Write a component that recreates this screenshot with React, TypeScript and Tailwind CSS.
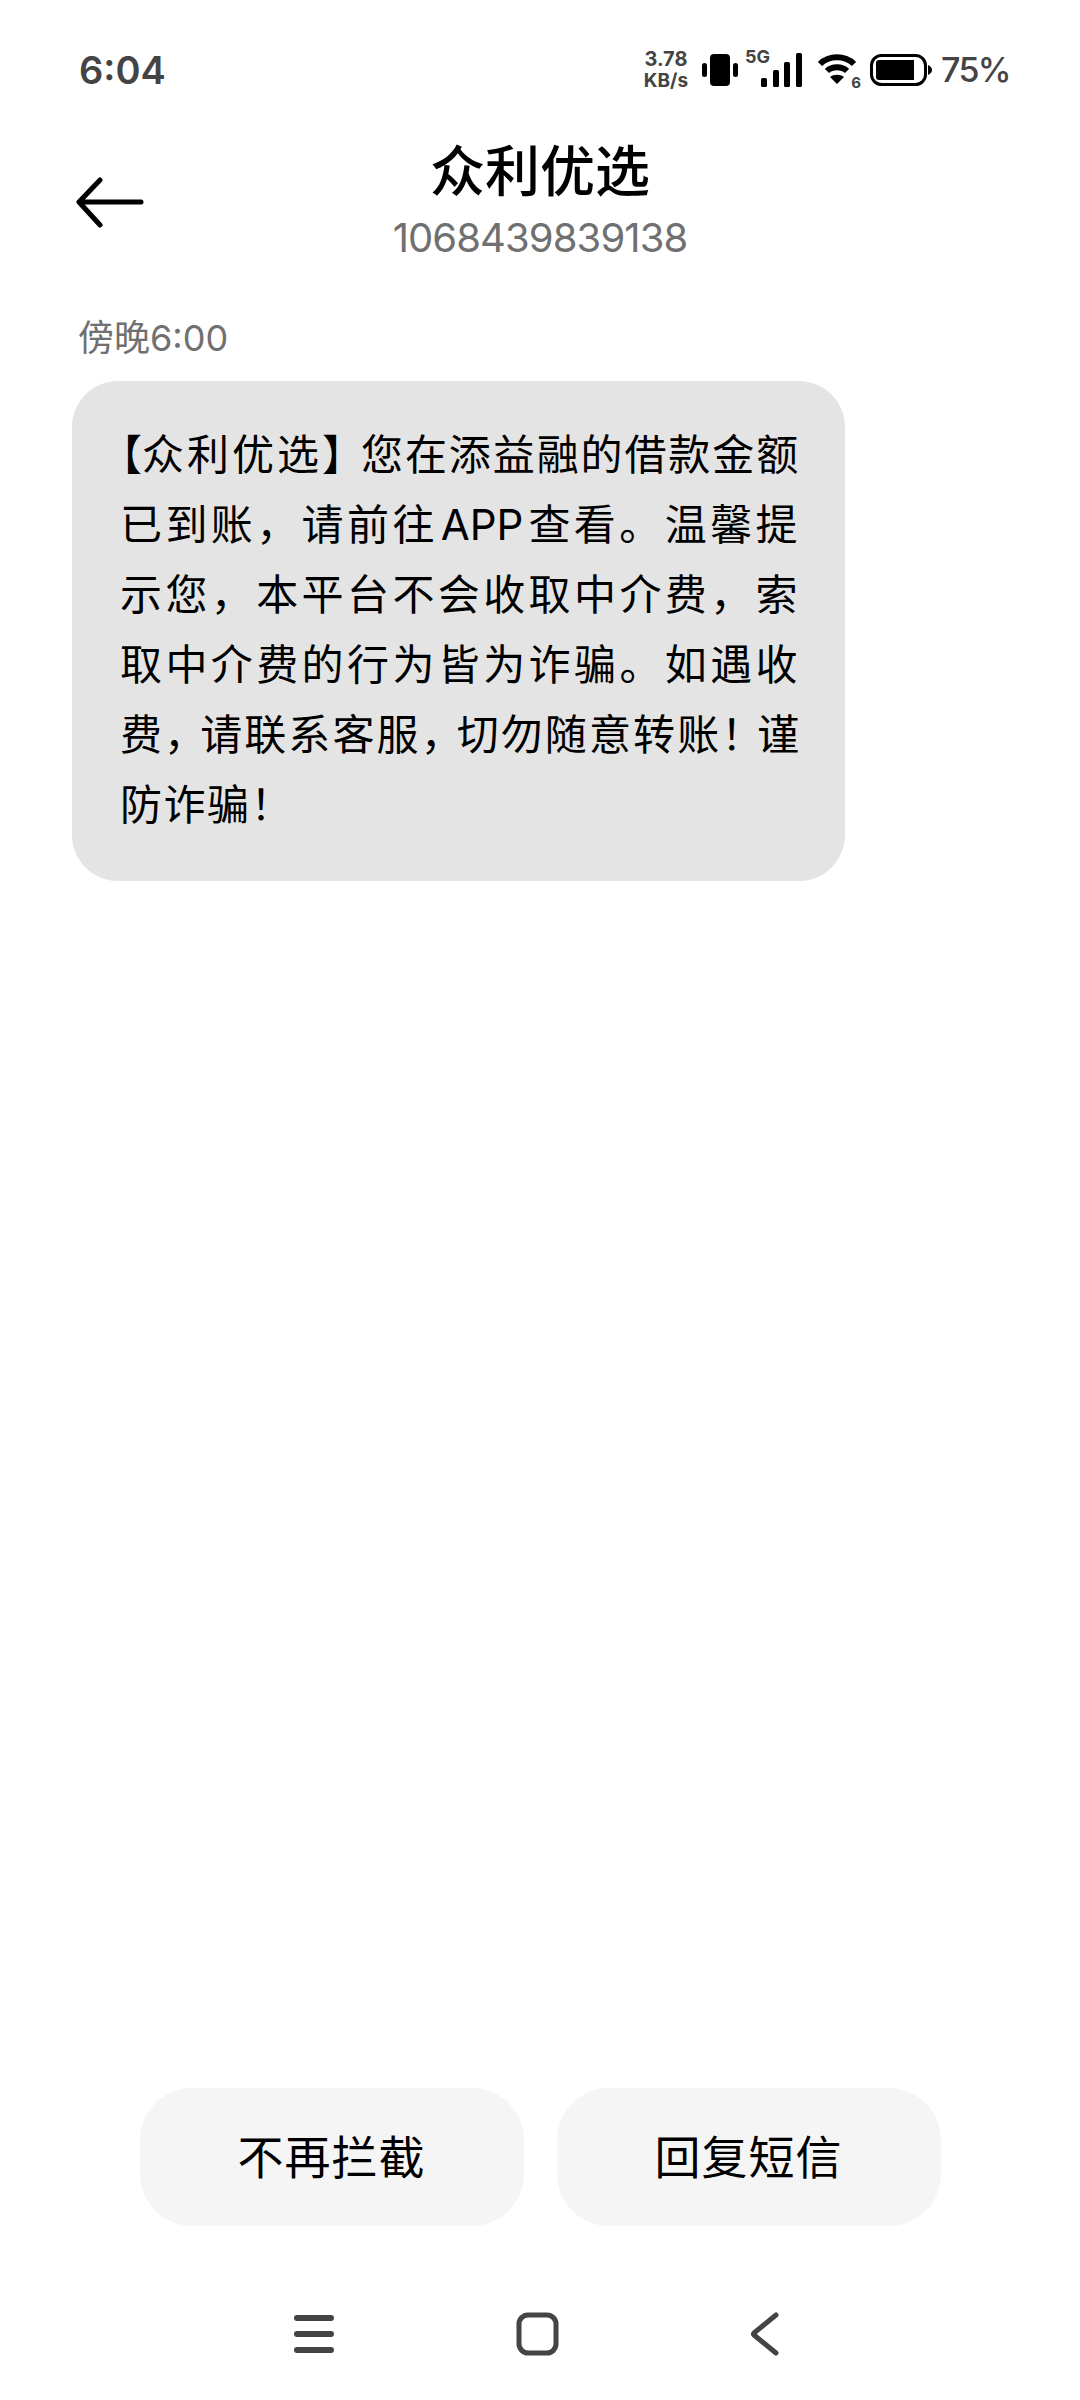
function Line({ children, className }: { children: React.ReactNode; className?: string }) {
  return <div className={`text-[42px] leading-[70px] text-black whitespace-pre ${className ?? "tracking-[3.4px]"}`}>{children}</div>;
}

function StatusIcons() {
  return (
    <div className="flex items-center">
      <div className="w-[50px] text-[20px] leading-[22px] font-bold text-[#444] text-center">
        <div>3.78</div>
        <div className="text-[19px]">KB/s</div>
      </div>
      <svg width="38" height="34" viewBox="0 0 38 34" className="ml-[10px]" fill="#000">
        <rect x="9" y="1" width="20" height="32" rx="4" />
        <rect x="1" y="10" width="5" height="14" rx="2.5" />
        <rect x="32" y="10" width="5" height="14" rx="2.5" />
      </svg>
      <div className="relative w-[62px] h-[40px] ml-[6px]">
        <span className="absolute left-0 top-[-3px] text-[18px] leading-[20px] font-bold text-[#444]">5G</span>
        <svg width="62" height="40" viewBox="0 0 62 40" fill="#000" className="absolute left-0 top-0">
          <rect x="16" y="28" width="6" height="9" rx="1.5" />
          <rect x="28" y="20" width="6" height="17" rx="1.5" />
          <rect x="39" y="12" width="6" height="25" rx="1.5" />
          <rect x="51" y="3" width="6" height="34" rx="1.5" />
        </svg>
      </div>
      <div className="relative w-[44px] h-[38px] ml-[10px]">
        <svg width="40" height="32" viewBox="0 0 40 32" className="absolute left-0 top-[2px]" fill="none" stroke="#000" strokeWidth="6">
          <path d="M3 11 C12 2 28 2 37 11" />
          <path d="M10 18 C15 13 25 13 30 18" />
          <path d="M13 24 L20 31 L27 24 C23 21 17 21 13 24 Z" fill="#000" stroke="none" />
        </svg>
        <span className="absolute right-0 bottom-[-3px] text-[15px] leading-[18px] font-bold text-[#444]">6</span>
      </div>
      <svg width="62" height="32" viewBox="0 0 62 32" className="ml-[9px]">
        <rect x="1.5" y="1.5" width="54" height="29" rx="10" fill="none" stroke="#000" strokeWidth="3" />
        <path d="M9 6 H44 V26 H9 Q6 26 6 23 V9 Q6 6 9 6 Z" fill="#000" />
        <path d="M58 11 Q62 13 62 16 Q62 19 58 21 Z" fill="#000" />
      </svg>
      <span className="ml-[9px] text-[34px] leading-none font-medium text-[#444] tracking-[-1.6px]">75%</span>
    </div>
  );
}

export default function App() {
  return (
    <div className="w-[1080px] h-[2400px] bg-white flex flex-col font-['Inter','Noto_Sans_CJK_SC',sans-serif]">
      {/* status bar */}
      <div className="h-[70px] mt-[35px] pl-[79px] pr-[70px] flex items-center justify-between shrink-0">
        <span className="text-[38px] font-semibold text-[#444]">6:04</span>
        <StatusIcons />
      </div>

      {/* header */}
      <div className="relative flex flex-col items-center mt-[30px] shrink-0">
        <svg width="68" height="52" viewBox="0 0 68 52" className="absolute left-[76px] top-[42px]" fill="none" stroke="#000" strokeWidth="5" strokeLinecap="round" strokeLinejoin="round">
          <path d="M65 25 H3 M24 3 L3 25 L24 48" />
        </svg>
        <h1 className="text-[55px] leading-[72px] font-medium text-black">众利优选</h1>
        <div className="mt-[3px] text-[40px] leading-[56px] text-[#707070] tracking-[-0.9px]">1068439839138</div>
      </div>

      {/* message */}
      <div className="mt-[47px] pl-[78px] text-[36px] leading-[50px] text-[#707070] shrink-0">傍晚6:00</div>
      <div className="mt-[18px] ml-[72px] w-[773px] h-[500px] bg-[#e4e4e4] rounded-[46px] pl-[48px] pt-[39px] shrink-0">
        <Line className="tracking-[3px]">
          <span className="-ml-[20px] tracking-[-17px]">【</span>
          <span className="ml-[17px]">众利优选</span>
          <span className="tracking-[-3px]">】</span>
          <span className="tracking-[1.9px]">您在添益融的借款金额</span>
        </Line>
        <Line>已到账，请前往<span className="ml-[3px] mr-[5px] tracking-normal">APP</span>查看。温馨提</Line>
        <Line>示您，本平台不会收取中介费，索</Line>
        <Line>取中介费的行为皆为诈骗。如遇收</Line>
        <Line className="tracking-[2.1px]">
          费<span className="tracking-[-6px]">，</span>请联系客服<span className="tracking-[-6px]">，</span>切勿随意转账<span className="tracking-[-6px]">！</span>谨
        </Line>
        <Line className="tracking-[1.5px]">防诈骗！</Line>
      </div>

      <div className="flex-1" />

      {/* actions */}
      <div className="flex justify-center gap-[33px] shrink-0">
        <button className="w-[384px] h-[138px] rounded-[52px] bg-[#f5f5f5] text-[46px] tracking-[1px] text-black">不再拦截</button>
        <button className="w-[384px] h-[138px] rounded-[52px] bg-[#f5f5f5] text-[46px] tracking-[1px] text-black">回复短信</button>
      </div>

      {/* nav bar */}
      <div className="h-[174px] pb-[36px] pr-[8px] flex items-end justify-center shrink-0">
        <div className="flex items-center h-[60px]">
          <svg width="44" height="44" viewBox="0 0 44 44" stroke="#444" strokeWidth="6" strokeLinecap="round">
            <path d="M5 6 H39 M5 22 H39 M5 38 H39" />
          </svg>
          <svg width="44" height="44" viewBox="0 0 44 44" fill="none" stroke="#444" strokeWidth="5" className="ml-[180px]">
            <rect x="3" y="3" width="37" height="38" rx="9" />
          </svg>
          <svg width="30" height="44" viewBox="0 0 30 44" fill="none" stroke="#444" strokeWidth="5" strokeLinecap="round" strokeLinejoin="round" className="ml-[190px]">
            <path d="M26 3 L4 21 Q3 22 4 23 L26 41" />
          </svg>
        </div>
      </div>
    </div>
  );
}
